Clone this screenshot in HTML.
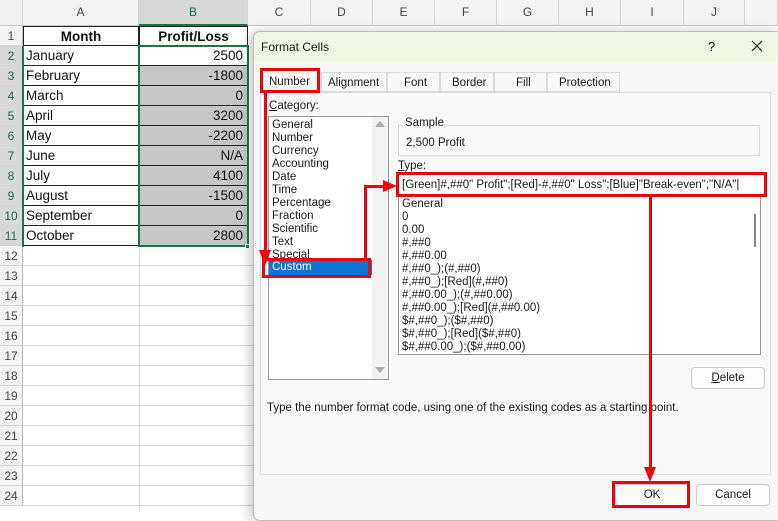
<!DOCTYPE html>
<html><head><style>
*{margin:0;padding:0;box-sizing:border-box}
body{width:778px;height:511px;overflow:hidden;background:#fff;font-family:"Liberation Sans",sans-serif;position:relative}
.a{position:absolute}
.ch{position:absolute;top:0;height:26px;line-height:25px;text-align:center;font-size:12px;color:#444;border-right:1px solid #d4d4d4;background:#f3f3f3;border-bottom:1px solid #c8c8c8}
.rh{position:absolute;left:0;width:23px;height:20px;line-height:20px;text-align:center;font-size:12px;color:#444;background:#f3f3f3;border-bottom:1px solid #d4d4d4;border-right:1px solid #bbb}
.c{position:absolute;height:20px;line-height:20px;font-size:13.5px;color:#111;border-bottom:1px solid #d4d4d4;border-right:1px solid #d4d4d4}
.dl{font-size:11.5px;color:#1a1a1a}
.red{position:absolute;background:#e8070f}
.rb{position:absolute;border:3px solid #e8070f}
</style></head><body>
<div class="ch" style="left:0;width:23px;background:#efefef"></div>
<div class="ch" style="left:23px;width:116px">A</div>
<div class="ch" style="left:139px;width:109px;background:#d8d8d8;color:#1e6b3c;border-bottom:2px solid #217346">B</div>
<div class="ch" style="left:248px;width:63px">C</div>
<div class="ch" style="left:311px;width:62px">D</div>
<div class="ch" style="left:373px;width:62px">E</div>
<div class="ch" style="left:435px;width:62px">F</div>
<div class="ch" style="left:497px;width:62px">G</div>
<div class="ch" style="left:559px;width:62px">H</div>
<div class="ch" style="left:621px;width:63px">I</div>
<div class="ch" style="left:684px;width:61px">J</div>
<div class="ch" style="left:745px;width:33px"></div>
<div class="rh" style="top:26px">1</div>
<div class="rh" style="top:46px;color:#1e6b3c;background:#d8d8d8">2</div>
<div class="rh" style="top:66px;color:#1e6b3c;background:#d8d8d8">3</div>
<div class="rh" style="top:86px;color:#1e6b3c;background:#d8d8d8">4</div>
<div class="rh" style="top:106px;color:#1e6b3c;background:#d8d8d8">5</div>
<div class="rh" style="top:126px;color:#1e6b3c;background:#d8d8d8">6</div>
<div class="rh" style="top:146px;color:#1e6b3c;background:#d8d8d8">7</div>
<div class="rh" style="top:166px;color:#1e6b3c;background:#d8d8d8">8</div>
<div class="rh" style="top:186px;color:#1e6b3c;background:#d8d8d8">9</div>
<div class="rh" style="top:206px;color:#1e6b3c;background:#d8d8d8">10</div>
<div class="rh" style="top:226px;color:#1e6b3c;background:#d8d8d8">11</div>
<div class="rh" style="top:246px">12</div><div class="rh" style="top:266px">13</div><div class="rh" style="top:286px">14</div><div class="rh" style="top:306px">15</div><div class="rh" style="top:326px">16</div><div class="rh" style="top:346px">17</div><div class="rh" style="top:366px">18</div><div class="rh" style="top:386px">19</div><div class="rh" style="top:406px">20</div><div class="rh" style="top:426px">21</div><div class="rh" style="top:446px">22</div><div class="rh" style="top:466px">23</div><div class="rh" style="top:486px">24</div>
<div class="a" style="left:23px;top:246px;width:230px;height:265px;background:repeating-linear-gradient(to bottom,#fff 0,#fff 19px,#d9d9d9 19px,#d9d9d9 20px)"></div>
<div class="a" style="left:139px;top:246px;width:1px;height:265px;background:#d9d9d9"></div>
<div class="c" style="left:23px;top:26px;width:116px;text-align:center;font-weight:bold;border:1px solid #222">Month</div>
<div class="c" style="left:139px;top:26px;width:109px;text-align:center;font-weight:bold;border:1px solid #222">Profit/Loss</div>
<div class="c" style="left:23px;top:46px;width:116px;padding-left:3px;border-bottom-color:#222">January</div>
<div class="c" style="left:139px;top:46px;width:109px;text-align:right;padding-right:4px;border-bottom-color:#222">2500</div>
<div class="c" style="left:23px;top:66px;width:116px;padding-left:3px;border-bottom-color:#222">February</div>
<div class="c" style="left:139px;top:66px;width:109px;text-align:right;padding-right:4px;background:#c6c6c6;border-bottom-color:#222">-1800</div>
<div class="c" style="left:23px;top:86px;width:116px;padding-left:3px;border-bottom-color:#222">March</div>
<div class="c" style="left:139px;top:86px;width:109px;text-align:right;padding-right:4px;background:#c6c6c6;border-bottom-color:#222">0</div>
<div class="c" style="left:23px;top:106px;width:116px;padding-left:3px;border-bottom-color:#222">April</div>
<div class="c" style="left:139px;top:106px;width:109px;text-align:right;padding-right:4px;background:#c6c6c6;border-bottom-color:#222">3200</div>
<div class="c" style="left:23px;top:126px;width:116px;padding-left:3px;border-bottom-color:#222">May</div>
<div class="c" style="left:139px;top:126px;width:109px;text-align:right;padding-right:4px;background:#c6c6c6;border-bottom-color:#222">-2200</div>
<div class="c" style="left:23px;top:146px;width:116px;padding-left:3px;border-bottom-color:#222">June</div>
<div class="c" style="left:139px;top:146px;width:109px;text-align:right;padding-right:4px;background:#c6c6c6;border-bottom-color:#222">N/A</div>
<div class="c" style="left:23px;top:166px;width:116px;padding-left:3px;border-bottom-color:#222">July</div>
<div class="c" style="left:139px;top:166px;width:109px;text-align:right;padding-right:4px;background:#c6c6c6;border-bottom-color:#222">4100</div>
<div class="c" style="left:23px;top:186px;width:116px;padding-left:3px;border-bottom-color:#222">August</div>
<div class="c" style="left:139px;top:186px;width:109px;text-align:right;padding-right:4px;background:#c6c6c6;border-bottom-color:#222">-1500</div>
<div class="c" style="left:23px;top:206px;width:116px;padding-left:3px;border-bottom-color:#222">September</div>
<div class="c" style="left:139px;top:206px;width:109px;text-align:right;padding-right:4px;background:#c6c6c6;border-bottom-color:#222">0</div>
<div class="c" style="left:23px;top:226px;width:116px;padding-left:3px;border-bottom-color:#222">October</div>
<div class="c" style="left:139px;top:226px;width:109px;text-align:right;padding-right:4px;background:#c6c6c6;border-bottom-color:#222">2800</div>
<div class="a" style="left:22px;top:46px;width:2px;height:201px;background:#217346"></div>
<div class="a" style="left:138px;top:45px;width:111px;height:202px;border:2px solid #217346"></div>
<div class="a" style="left:245px;top:244px;width:5px;height:5px;background:#217346;border:1px solid #fff"></div>
<div class="a" style="left:253px;top:31px;width:530px;height:490px;background:#f7f7f7;border:1px solid #bbb;border-radius:7px;box-shadow:-4px 0 10px rgba(0,0,0,.2)"></div>
<div class="a" style="left:254px;top:32px;width:524px;height:30px;background:#edf7e2;border-radius:6px 0 0 0"></div>
<div class="a dl" style="left:261px;top:40px;font-size:12px">Format Cells</div>
<div class="a dl" style="left:708px;top:39px;font-size:13px">?</div>
<svg class="a" style="left:751px;top:40px" width="12" height="12"><path d="M1 1L11 11M11 1L1 11" stroke="#222" stroke-width="1.2"/></svg>
<div class="a" style="left:260px;top:92px;width:511px;height:383px;border:1px solid #dcdcdc;background:#f9f9f9"></div>
<div class="a dl" style="left:260px;top:70px;width:61px;height:23px;background:#f9f9f9;border:1px solid #dcdcdc;border-bottom:none;padding:5px 0 0 8px">Number</div>
<div class="a dl" style="left:321px;top:72px;width:66px;height:20px;border:1px solid #dcdcdc;padding:4px 0 0 6px">Alignment</div>
<div class="a dl" style="left:387px;top:72px;width:53px;height:20px;border:1px solid #dcdcdc;padding:4px 0 0 16px">Font</div>
<div class="a dl" style="left:440px;top:72px;width:54px;height:20px;border:1px solid #dcdcdc;padding:4px 0 0 11px">Border</div>
<div class="a dl" style="left:494px;top:72px;width:53px;height:20px;border:1px solid #dcdcdc;padding:4px 0 0 21px">Fill</div>
<div class="a dl" style="left:547px;top:72px;width:73px;height:20px;border:1px solid #dcdcdc;padding:4px 0 0 11px">Protection</div>
<div class="a dl" style="left:269px;top:100px"><u>C</u>ategory:</div>
<div class="a" style="left:268px;top:116px;width:121px;height:264px;border:1px solid #9a9a9a;background:#fff"></div>
<div class="a" style="left:372px;top:117px;width:16px;height:262px;background:#f2f2f2"></div>
<div class="a" style="left:375px;top:121px;width:0;height:0;border-left:5px solid transparent;border-right:5px solid transparent;border-bottom:6px solid #aaa"></div>
<div class="a" style="left:375px;top:367px;width:0;height:0;border-left:5px solid transparent;border-right:5px solid transparent;border-top:6px solid #aaa"></div>
<div class="a dl" style="left:272px;top:119px;line-height:13px">General<br>Number<br>Currency<br>Accounting<br>Date<br>Time<br>Percentage<br>Fraction<br>Scientific<br>Text<br>Special</div>
<div class="a dl" style="left:269px;top:260px;width:103px;height:15px;background:#0a74d8;color:#fff;padding:1px 0 0 3px">Custom</div>
<div class="a" style="left:398px;top:125px;width:362px;height:31px;border:1px solid #dcdcdc"></div>
<div class="a dl" style="left:403px;top:117px;background:#f9f9f9;padding:0 2px">Sample</div>
<div class="a dl" style="left:406px;top:137px">2,500 Profit</div>
<div class="a dl" style="left:398px;top:160px"><u>T</u>ype:</div>
<div class="a" style="left:398px;top:174px;width:364px;height:22px;background:#fff"></div>
<div class="a dl" style="left:402px;top:179px">[Green]#,##0" Profit";[Red]-#,##0" Loss";[Blue]"Break-even";"N/A"|</div>
<div class="a" style="left:398px;top:196px;width:363px;height:159px;border:1px solid #9a9a9a;background:#fff;overflow:hidden"></div>
<div class="a" style="left:754px;top:214px;width:2px;height:33px;background:#888"></div>
<div class="a dl" style="left:402px;top:198px;line-height:13px">General<br>0<br>0.00<br>#,##0<br>#,##0.00<br>#,##0_);(#,##0)<br>#,##0_);[Red](#,##0)<br>#,##0.00_);(#,##0.00)<br>#,##0.00_);[Red](#,##0.00)<br>$#,##0_);($#,##0)<br>$#,##0_);[Red]($#,##0)<br>$#,##0.00_);($#,##0.00)</div>
<div class="a dl" style="left:691px;top:367px;width:74px;height:22px;border:1px solid #ccc;border-radius:4px;background:#fdfdfd;text-align:center;line-height:20px"><u>D</u>elete</div>
<div class="a dl" style="left:267px;top:402px">Type the number format code, using one of the existing codes as a starting point.</div>
<div class="a dl" style="left:615px;top:484px;width:74px;height:22px;border:1px solid #ccc;border-radius:4px;background:#fdfdfd;text-align:center;line-height:20px">OK</div>
<div class="a dl" style="left:696px;top:484px;width:74px;height:22px;border:1px solid #ccc;border-radius:4px;background:#fdfdfd;text-align:center;line-height:20px">Cancel</div>
<div class="rb" style="left:260px;top:68px;width:60px;height:25px"></div>
<div class="red" style="left:264px;top:93px;width:3px;height:160px"></div>
<div class="a" style="left:259px;top:250px;width:0;height:0;border-left:6px solid transparent;border-right:6px solid transparent;border-top:16px solid #e8070f"></div>
<div class="rb" style="left:262px;top:258px;width:109px;height:20px"></div>
<div class="red" style="left:364px;top:185px;width:3px;height:74px"></div>
<div class="red" style="left:364px;top:185px;width:22px;height:3px"></div>
<div class="a" style="left:383px;top:180px;width:0;height:0;border-top:6px solid transparent;border-bottom:6px solid transparent;border-left:14px solid #e8070f"></div>
<div class="rb" style="left:396px;top:172px;width:371px;height:25px"></div>
<div class="red" style="left:649px;top:196px;width:3px;height:272px"></div>
<div class="a" style="left:644px;top:467px;width:0;height:0;border-left:6px solid transparent;border-right:6px solid transparent;border-top:15px solid #e8070f"></div>
<div class="rb" style="left:612px;top:481px;width:78px;height:27px"></div>
</body></html>
